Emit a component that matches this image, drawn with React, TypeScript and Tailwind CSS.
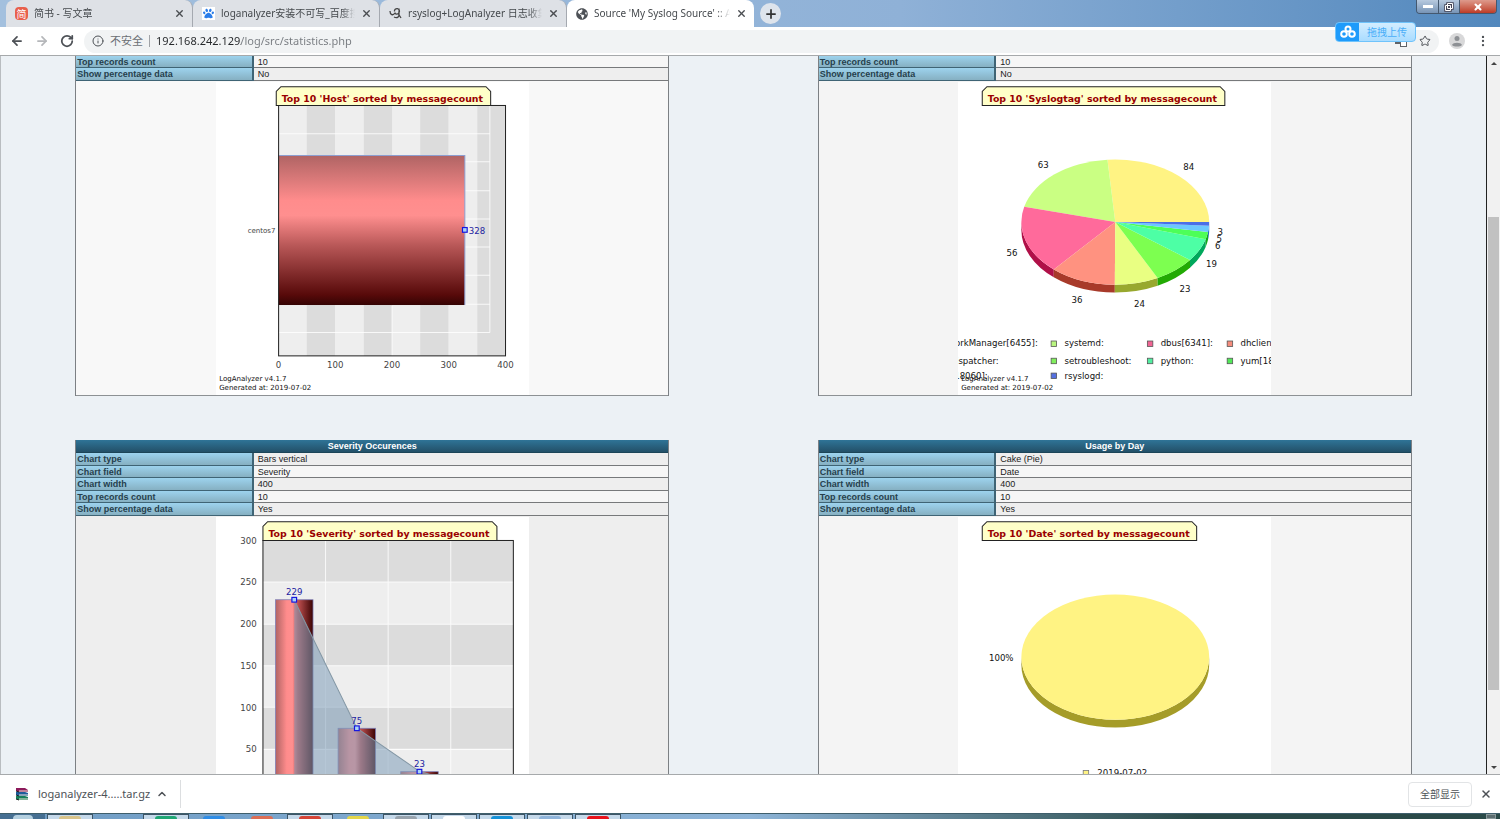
// src/App.tsx
import React from 'react';
import { ArrowLeft, ArrowRight, ChevronUp, Info, MoreVertical, Plus, RotateCw, Star, X } from 'lucide-react';
import { FaGlobeAmericas, FaPaw } from 'react-icons/fa';

type Row = [string, string];

const FONT = '"DejaVu Sans", Verdana, sans-serif';

const tabs = [
  { title: '简书 - 写文章', icon: 'jianshu', active: false },
  { title: 'loganalyzer安装不可写_百度搜', icon: 'baidu', active: false },
  { title: 'rsyslog+LogAnalyzer 日志收集', icon: 'script', active: false },
  { title: "Source 'My Syslog Source' :: A", icon: 'globe', active: true },
];

const TabIcon = ({ name }: { name: string }) => {
  if (name === 'jianshu') {
    return <span className="flex h-[13px] w-[13px] shrink-0 items-center justify-center rounded-sm bg-[#e8604c] text-[10px] leading-none text-white">简</span>;
  }
  if (name === 'baidu') {
    return (
      <span className="flex h-[13px] w-[13px] shrink-0 items-center justify-center bg-white">
        <FaPaw className="h-[11px] w-[11px] text-[#2b7de9]" />
      </span>
    );
  }
  if (name === 'script') {
    return (
      <svg viewBox="0 0 13 13" className="h-[13px] w-[13px] shrink-0" fill="none" stroke="#444" strokeWidth="1.3">
        <path d="M1 4c0 4 3 5 5 2M5.500 4.500a2.500 2.500 0 1 1 4.500 1c-1 2.500-4 2-4 0M10 1.500v6.500c0 3-3 3-5 2M9.500 7l2.500 4" />
      </svg>
    );
  }
  return <FaGlobeAmericas className="h-3 w-3 shrink-0 text-[#4d5156]" />;
};

const TabStrip = () => (
  <div className="relative flex h-[27px] shrink-0 bg-linear-to-r from-[#a3c0de] via-[#8fb1d7] via-60% to-[#5288bd] pl-1.5">
    {tabs.map((tab) => (
      <div
        key={tab.title}
        className={`flex w-[187px] items-center gap-1.5 rounded-t-lg pr-[7px] pl-[9px] ${tab.active ? 'bg-white' : 'border-r border-[#a5a9b0] bg-[#dee1e6]'}`}
      >
        <TabIcon name={tab.icon} />
        <span className="min-w-0 flex-1 overflow-hidden mask-r-from-90% text-[10px] whitespace-nowrap text-[#45494d]">{tab.title}</span>
        <button type="button" aria-label="Close tab" className="text-[#4a4d51]">
          <X className="h-[11px] w-[11px]" strokeWidth={3} />
        </button>
      </div>
    ))}
    <button type="button" aria-label="New tab" className="mt-[3px] ml-1.5 flex h-[21px] w-[21px] items-center justify-center rounded-full bg-[#dee4ec] text-[#333]">
      <Plus className="h-3.5 w-3.5" strokeWidth={3} />
    </button>
    <div className="mr-[3px] ml-auto flex h-[14px] overflow-hidden rounded-b border border-t-0 border-[#44586f] text-white">
      <button type="button" aria-label="Minimize" className="flex w-[22px] items-center justify-center border-r border-[#44586f] bg-linear-to-b from-[#b8cadf] to-[#7794b6]">
        <span className="h-[3px] w-2.5 bg-white" />
      </button>
      <button type="button" aria-label="Restore" className="flex w-[21px] items-center justify-center border-r border-[#44586f] bg-linear-to-b from-[#b8cadf] to-[#7794b6]">
        <svg viewBox="0 0 10 10" className="h-2.5 w-2.5" fill="none">
          <path d="M3.500 1.500h5v5h-5zM1.500 3.500h5v5h-5z" stroke="#445" strokeWidth="2.500" />
          <path d="M3.500 1.500h5v5h-5zM1.500 3.500h5v5h-5z" stroke="#fff" strokeWidth="1" />
        </svg>
      </button>
      <button type="button" aria-label="Close" className="flex w-[36px] items-center justify-center bg-linear-to-b from-[#dd9a8c] to-[#bd3a25]">
        <X className="h-2.5 w-2.5" strokeWidth={5} />
      </button>
    </div>
  </div>
);

const Toolbar = () => (
  <div className="relative flex h-7 shrink-0 items-center bg-white pr-2.5 pl-2.5 text-[#4d5156]">
    <button type="button" aria-label="Back" className="mr-[11px]"><ArrowLeft className="h-3.5 w-3.5" strokeWidth={3} /></button>
    <button type="button" aria-label="Forward" className="mr-[11px] text-[#b5b7ba]"><ArrowRight className="h-3.5 w-3.5" strokeWidth={3} /></button>
    <button type="button" aria-label="Reload"><RotateCw className="h-3.5 w-3.5" strokeWidth={3} /></button>
    <div className="mx-2.5 flex h-[23px] flex-1 items-center rounded-full bg-[#f1f3f4] pr-2 pl-2">
      <Info className="mr-1.5 h-3 w-3" />
      <label htmlFor="address" className="text-[11px] text-[#6b6f74]">不安全</label>
      <span className="mx-1.5 h-3 w-px bg-[#a0a3a7]" />
      <input
        id="address"
        type="text"
        defaultValue="192.168.242.129/log/src/statistics.php"
        className="min-w-0 flex-1 bg-linear-to-r from-[#25282b] from-[85px] to-[#777b80] to-[85px] bg-clip-text text-[11px] text-transparent outline-none"
      />
      <svg viewBox="0 0 12 12" className="mr-3 h-3 w-3">
        <rect x="0" y="1" width="7" height="8" fill="#5f6368" />
        <rect x="5.500" y="3.500" width="6" height="8" fill="#fff" stroke="#5f6368" />
      </svg>
      <button type="button" aria-label="Bookmark"><Star className="h-3 w-3" /></button>
    </div>
    <button type="button" aria-label="Profile" className="mr-[11px]">
      <svg viewBox="0 0 16 16" className="h-4 w-4">
        <circle cx="8" cy="8" r="8" fill="#d8d8d9" />
        <circle cx="8" cy="5.500" r="2.500" fill="#8d9094" />
        <path d="M3 12c1-3 9-3 10 0-2 2-8 2-10 0z" fill="#8d9094" />
      </svg>
    </button>
    <button type="button" aria-label="Menu"><MoreVertical className="h-3.5 w-3.5" /></button>

    {/* floating netdisk upload badge */}
    <button type="button" className="absolute -top-[5px] right-[84px] flex h-5 overflow-hidden rounded border border-[#6fc3fb] bg-linear-to-b from-[#d3edff] to-[#a9dcff] text-[10px] text-[#4aaef8]">
      <span className="flex h-full w-[23px] items-center justify-center bg-[#1e9bfb]">
        <svg viewBox="0 0 16 14" className="h-3.5 w-4" fill="none" stroke="#fff" strokeWidth="2">
          <circle cx="8" cy="4" r="2.500" />
          <circle cx="4" cy="9" r="2.800" />
          <circle cx="12" cy="9" r="2.800" />
        </svg>
      </span>
      <span className="w-14 text-center leading-[18px]">拖拽上传</span>
    </button>
  </div>
);

const ChartTitle = ({ x, width, text }: { x: number; width: number; text: string }) => (
  <g>
    <path d={`M${x} 30V12l6-6H${x + width - 6}l6 6V30z`} fill="#ffffc8" stroke="#222" strokeWidth="1.300" />
    <text x={x + 7} y="25" fontSize="12" fontWeight="bold" fill="#990000">{text}</text>
  </g>
);

const Footer = () => (
  <g fontSize="9" fill="#111">
    <text x="4" y="382">LogAnalyzer v4.1.7</text>
    <text x="4" y="393">Generated at: 2019-07-02</text>
  </g>
);

const Marker = ({ x, y }: { x: number; y: number }) => (
  <rect x={x - 3} y={y - 3} width="6" height="6" fill="#a9d3f5" stroke="#1414e0" strokeWidth="1.500" />
);

const ChartFrame = ({ label, children }: { label: string; children: React.ReactNode }) => (
  <svg viewBox="0 0 400 400" role="img" aria-label={label} className="mx-auto block h-[313px] w-[313px] bg-white" fontFamily={FONT}>
    {children}
  </svg>
);

const HostChart = () => (
  <ChartFrame label="Messages by host">
    <defs>
      <linearGradient id="barH" x1="0" y1="0" x2="0" y2="1">
        <stop offset="0" stopColor="#b06464" />
        <stop offset="0.300" stopColor="#ff8c8c" />
        <stop offset="0.400" stopColor="#ff8f8f" />
        <stop offset="0.600" stopColor="#b95858" />
        <stop offset="0.930" stopColor="#580a0a" />
        <stop offset="1" stopColor="#350303" />
      </linearGradient>
    </defs>
    <rect x="80" y="30" width="290" height="320" fill="#eee" />
    {[116, 189, 261, 334].map((x) => (
      <rect key={x} x={x} y="30" width="36" height="320" fill="#dcdcdc" />
    ))}
    <g stroke="#fff" strokeOpacity="0.800" strokeWidth="1.300">
      {[66, 102, 139, 175, 211, 247, 284, 320].map((y) => (
        <path key={y} d={`M80 ${y}H350`} />
      ))}
      <path d="M350 30V320M225 286V350" />
    </g>
    <rect x="80" y="94" width="238" height="191" fill="url(#barH)" />
    <path d="M80 94H318V285" fill="none" stroke="#8d9ed0" strokeWidth="1.300" />
    <rect x="80" y="30" width="290" height="320" fill="none" stroke="#222" strokeWidth="1.300" />
    <ChartTitle x={77} width={274} text="Top 10 'Host' sorted by messagecount" />
    <Marker x={318} y={189} />
    <text x="323" y="194" fontSize="11" fill="#1c1ca0">328</text>
    <text x="76" y="193" fontSize="9" fill="#444" textAnchor="end">centos7</text>
    {[0, 100, 200, 300, 400].map((n) => (
      <text key={n} x={80 + n * 0.725} y="366" fontSize="11" fill="#444" textAnchor="middle">{n}</text>
    ))}
    <Footer />
  </ChartFrame>
);

const severities = [
  { value: 229, x: 100 },
  { value: 75, x: 180 },
  { value: 23, x: 260 },
];

const sevY = (value: number) => 350 - (value * 320) / 300;

const SeverityChart = () => (
  <ChartFrame label="Messages by severity">
    <defs>
      <linearGradient id="barV">
        <stop offset="0" stopColor="#b06464" />
        <stop offset="0.300" stopColor="#ff8c8c" />
        <stop offset="0.450" stopColor="#ff8f8f" />
        <stop offset="0.600" stopColor="#c05050" />
        <stop offset="1" stopColor="#3a0303" />
      </linearGradient>
    </defs>
    <rect x="60" y="30" width="320" height="320" fill="#eee" />
    {[30, 137, 243].map((y) => (
      <rect key={y} x="60" y={y} width="320" height="53" fill="#dcdcdc" />
    ))}
    <path d="M140 30V350M220 30V350M300 30V350M60 83H380M60 137H380M60 190H380M60 243H380M60 297H380" stroke="#fff" strokeOpacity="0.800" strokeWidth="1.300" />
    {severities.map((s) => (
      <rect key={s.x} x={s.x - 24} y={sevY(s.value)} width="48" height={350 - sevY(s.value)} fill="url(#barV)" stroke="#8080b8" />
    ))}
    <path d="M100 106L180 270L260 325L340 349V350H100z" fill="#7d9db8" fillOpacity="0.550" />
    <path d="M100 106L180 270L260 325L340 349" fill="none" stroke="#8397a5" strokeWidth="1.300" />
    <rect x="60" y="30" width="320" height="320" fill="none" stroke="#222" strokeWidth="1.300" />
    <ChartTitle x={60} width={299} text="Top 10 'Severity' sorted by messagecount" />
    {severities.map((s) => (
      <g key={s.x}>
        <Marker x={s.x} y={sevY(s.value)} />
        <text x={s.x} y={sevY(s.value) - 6} fontSize="11" fill="#1c1ca0" textAnchor="middle">{s.value}</text>
      </g>
    ))}
    {[300, 250, 200, 150, 100, 50].map((n) => (
      <text key={n} x="52" y={sevY(n) + 4} fontSize="11" fill="#444" textAnchor="end">{n}</text>
    ))}
  </ChartFrame>
);

const slices = [
  { value: 84, fill: '#fff383', edge: '#a59c28', x: 295, y: 112 },
  { value: 63, fill: '#caff83', edge: '#70a528', x: 109, y: 110 },
  { value: 56, fill: '#ff6a9b', edge: '#b01048', x: 69, y: 223 },
  { value: 36, fill: '#ff9280', edge: '#a83a2a', x: 152, y: 283 },
  { value: 24, fill: '#e9ff82', edge: '#98a82e', x: 232, y: 287 },
  { value: 23, fill: '#7dff50', edge: '#22aa04', x: 290, y: 268 },
  { value: 19, fill: '#4dffa5', edge: '#00a85c', x: 324, y: 237 },
  { value: 6, fill: '#4dff58', edge: '#10a81a', x: 332, y: 214 },
  { value: 5, fill: '#6bc8ff', edge: '#2070c0', x: 334, y: 205 },
  { value: 3, fill: '#4a6fe8', edge: '#2040b0', x: 335, y: 196 },
];

const total = slices.reduce((sum, s) => sum + s.value, 0);

const point = (angle: number, drop = 0) =>
  `${(201 + 120 * Math.cos(angle)).toFixed(1)} ${(179 - 80 * Math.sin(angle) + drop).toFixed(1)}`;

// every slice runs counter-clockwise from three o'clock
const pie = slices.map((s, i) => {
  const before = slices.slice(0, i).reduce((sum, p) => sum + p.value, 0);
  const from = (before / total) * 2 * Math.PI;
  const to = ((before + s.value) / total) * 2 * Math.PI;
  const rim = Math.max(from, Math.PI);
  return {
    ...s,
    top: `M201 179L${point(from)}A120 80 0 0 0 ${point(to)}z`,
    wall: to > Math.PI ? `M${point(rim)}A120 80 0 0 0 ${point(to)}L${point(to, 10)}A120 80 0 0 1 ${point(rim, 10)}z` : '',
  };
});

const legend = [
  { x: 136, y: 338, text: 'systemd:', fill: '#b9f57f' },
  { x: 259, y: 338, text: 'dbus[6341]:', fill: '#f06493' },
  { x: 361, y: 338, text: 'dhclient:', fill: '#f58c7c' },
  { x: 136, y: 360, text: 'setroubleshoot:', fill: '#80ee5c' },
  { x: 259, y: 360, text: 'python:', fill: '#50eea0' },
  { x: 361, y: 360, text: 'yum[18060]:', fill: '#50e858' },
  { x: 136, y: 379, text: 'rsyslogd:', fill: '#5570e0' },
];

const SyslogtagChart = () => (
  <ChartFrame label="Messages by syslogtag">
    <ChartTitle x={31} width={310} text="Top 10 'Syslogtag' sorted by messagecount" />
    {pie.map((s) => s.wall && <path key={s.value} d={s.wall} fill={s.edge} />)}
    {pie.map((s) => <path key={s.value} d={s.top} fill={s.fill} />)}
    <g fontSize="11" fill="#111">
      {pie.map((s) => (
        <text key={s.value} x={s.x} y={s.y} textAnchor="middle">{s.value}</text>
      ))}
      <text x="102" y="338" textAnchor="end">NetworkManager[6455]:</text>
      <text x="52" y="360" textAnchor="end">nm-dispatcher:</text>
      <text x="38" y="379" textAnchor="end">yum[18060]:</text>
      {legend.map((item) => (
        <g key={item.text}>
          <rect x={item.x - 17} y={item.y - 7} width="7" height="7" fill={item.fill} stroke="#555" />
          <text x={item.x} y={item.y}>{item.text}</text>
        </g>
      ))}
    </g>
    <Footer />
  </ChartFrame>
);

const DateChart = () => (
  <ChartFrame label="Messages by date">
    <ChartTitle x={31} width={274} text="Top 10 'Date' sorted by messagecount" />
    <path d="M81 179A120 80 0 0 0 321 179V189A120 80 0 0 1 81 189z" fill="#a59c28" />
    <ellipse cx="201" cy="179" rx="120" ry="80" fill="#fff383" />
    <g fontSize="11" fill="#111">
      <text x="71" y="184" textAnchor="end">100%</text>
      <rect x="160" y="324" width="7" height="7" fill="#fff383" stroke="#777" />
      <text x="178" y="331">2019-07-02</text>
    </g>
  </ChartFrame>
);

const Panel = ({ title, rows, tone, children }: { title?: string; rows: Row[]; tone: string; children: React.ReactNode }) => (
  <table className="mx-auto w-4/5 table-fixed border-separate border-spacing-0 border-x border-[#7c8084] text-[9px] leading-[10px] text-[#222]">
    <colgroup>
      <col className="w-[30%]" />
      <col />
    </colgroup>
    {title && (
      <thead>
        <tr className="h-[13px]">
          <th colSpan={2} className="border-b border-[#1c4558] bg-linear-to-b from-[#2f7497] to-[#235068] p-0 text-center font-bold text-white">{title}</th>
        </tr>
      </thead>
    )}
    <tbody>
      {rows.map(([label, value]) => (
        <tr key={label} className="nth-last-[even]:h-[13px] nth-last-[even]:bg-[#eeeeee] nth-last-[odd]:h-3 nth-last-[odd]:bg-[#f6f6f6]">
          <th scope="row" className="border-r-2 border-b border-[#3f6475] bg-linear-to-b from-[#9dd3ee] to-[#86b0c2] p-0 pl-px text-left font-bold text-[#26404c]">{label}</th>
          <td className="border-b border-[#77797b] p-0 pl-1">{value}</td>
        </tr>
      ))}
      <tr>
        <td colSpan={2} className={`border-b border-[#8d9194] p-0 pt-px ${tone}`}>{children}</td>
      </tr>
    </tbody>
  </table>
);

const tailRows: Row[] = [['Top records count', '10'], ['Show percentage data', 'No']];

const settings = (type: string, field: string): Row[] => [
  ['Chart type', type],
  ['Chart field', field],
  ['Chart width', '400'],
  ['Top records count', '10'],
  ['Show percentage data', 'Yes'],
];

const ScrollBar = () => (
  <div className="flex w-[14px] shrink-0 flex-col items-center border-l border-[#222] bg-[#f1f1f1]">
    <button type="button" aria-label="Scroll up" className="flex h-[14px] w-full items-center justify-center">
      <span className="border-x-3 border-b-3 border-x-transparent border-b-[#444]" />
    </button>
    <div className="flex-[147]" />
    <div className="w-[11px] flex-[475] bg-[#c1c1c1]" />
    <div className="flex-[70]" />
    <button type="button" aria-label="Scroll down" className="flex h-[14px] w-full items-center justify-center">
      <span className="border-x-3 border-t-3 border-x-transparent border-t-[#444]" />
    </button>
  </div>
);

const DownloadBar = () => (
  <div className="flex h-[38px] shrink-0 items-center bg-white pr-2 pl-[15px] text-[#4d5156]">
    <svg viewBox="0 0 14 14" className="mr-[9px] h-3.5 w-3.5">
      <path d="M1 1h9l3 2v2H4L1 4z" fill="#8c1a5b" />
      <path d="M1 5h9l3 1v3H4L1 8z" fill="#1d5d9b" />
      <path d="M1 9h9l3 1v3H4L1 12z" fill="#15805a" />
      <path d="M4 4h9M4 8h9M4 12h9" stroke="#f2e9d8" />
      <path d="M1 4l3 1M1 8l3 1M1 12l3 1" stroke="#222" />
    </svg>
    <a href="#download" className="text-[11px]">loganalyzer-4.....tar.gz</a>
    <button type="button" aria-label="Download options" className="ml-1.5">
      <ChevronUp className="h-3 w-3" strokeWidth={3} />
    </button>
    <span className="ml-3 h-7 w-px bg-[#dcdee0]" />
    <button type="button" className="mr-2 ml-auto h-[25px] rounded border border-[#e2e4e6] px-[11px] text-[10px]">全部显示</button>
    <button type="button" aria-label="Close downloads bar">
      <X className="h-3 w-3" strokeWidth={3} />
    </button>
  </div>
);

const TaskItem = ({ framed, color }: { framed: boolean; color: string }) => (
  <div className={`flex w-[46px] items-end justify-center ${framed ? 'border-x border-t border-[#3d5566] bg-[#c5d9ea]' : ''}`}>
    <span className={`h-[3px] w-[22px] rounded-t ${color}`} />
  </div>
);

const TaskBar = () => (
  <div className="flex h-1.5 shrink-0 gap-0.5 overflow-hidden border-t border-[#3f5f6c] bg-linear-to-r from-[#6f9cc4] via-[#8db4d8] via-50% to-[#2a4a48] to-80%">
    <div className="flex w-[45px] items-end justify-center bg-[#466f92]">
      <span className="h-1 w-5 rounded-t-full bg-[#b4d0e0]" />
    </div>
    <TaskItem framed color="bg-[#d9c48a]" />
    <TaskItem framed={false} color="bg-transparent" />
    <TaskItem framed color="bg-[#1fa774]" />
    <TaskItem framed={false} color="bg-[#2f8de6]" />
    <TaskItem framed={false} color="bg-[#dc6e55]" />
    <TaskItem framed color="bg-[#d64537]" />
    <TaskItem framed={false} color="bg-[#e3d64a]" />
    <TaskItem framed color="bg-[#98a3ad]" />
    <TaskItem framed color="bg-white" />
    <TaskItem framed color="bg-[#1592d8]" />
    <TaskItem framed color="bg-[#8fb4da]" />
    <TaskItem framed color="bg-[#e8121b]" />
    <div className="mr-1 ml-auto w-2.5 border border-[#8a9a9c] bg-[#5c6d70]" />
  </div>
);

const App = () => {
  return (
    <div className="flex h-screen flex-col overflow-hidden bg-white font-['Noto_Sans','Noto_Sans_CJK_SC',sans-serif]">
      <TabStrip />
      <Toolbar />
      <div className="flex min-h-0 flex-1 border-y border-[#a6a9ab]">
        <main className="grid min-w-0 flex-1 grid-cols-2 content-start gap-y-11 overflow-hidden border-l border-[#b9bdc0] bg-[#ecf1f5] font-['Liberation_Sans',Arial,sans-serif]">
          <Panel rows={tailRows} tone="bg-[#f8f8f8]">
            <HostChart />
          </Panel>
          <Panel rows={tailRows} tone="bg-[#f4f4f4]">
            <SyslogtagChart />
          </Panel>
          <Panel title="Severity Occurences" rows={settings('Bars vertical', 'Severity')} tone="bg-[#eeeeee]">
            <SeverityChart />
          </Panel>
          <Panel title="Usage by Day" rows={settings('Cake (Pie)', 'Date')} tone="bg-[#f4f4f4]">
            <DateChart />
          </Panel>
        </main>
        <ScrollBar />
      </div>
      <DownloadBar />
      <TaskBar />
    </div>
  );
};

export default App;
